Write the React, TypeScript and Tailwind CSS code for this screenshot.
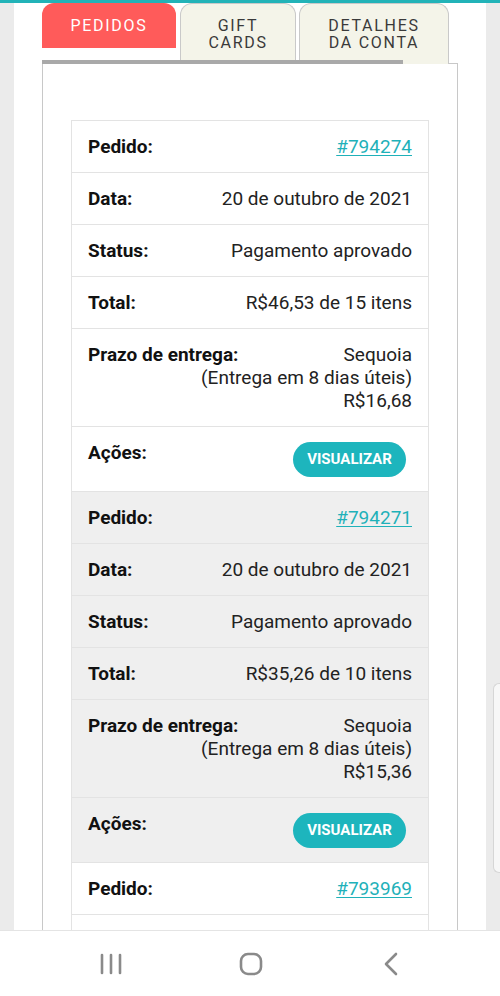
type Order = {
  id: string;
  date: string;
  status: string;
  total: string;
  shipping: string[];
};

const orders: Order[] = [
  {
    id: "#794274",
    date: "20 de outubro de 2021",
    status: "Pagamento aprovado",
    total: "R$46,53 de 15 itens",
    shipping: ["Sequoia", "(Entrega em 8 dias úteis)", "R$16,68"],
  },
  {
    id: "#794271",
    date: "20 de outubro de 2021",
    status: "Pagamento aprovado",
    total: "R$35,26 de 10 itens",
    shipping: ["Sequoia", "(Entrega em 8 dias úteis)", "R$15,36"],
  },
  {
    id: "#793969",
    date: "19 de outubro de 2021",
    status: "Pagamento aprovado",
    total: "R$22,10 de 6 itens",
    shipping: ["Sequoia", "(Entrega em 8 dias úteis)", "R$14,20"],
  },
];

// label floats left, value flows right-aligned around it (like a responsive table cell)
function Row({ label, children }: { label: string; children: React.ReactNode }) {
  return (
    <div className="flow-root border-b border-[#e3e3e3] px-4 py-[14px] text-[19px] leading-[23px]">
      <span className="float-left whitespace-nowrap pr-2 font-bold text-[#111]">{label}</span>
      <div className="text-right text-[#222]">{children}</div>
    </div>
  );
}

function OrderBlock({ order, shaded }: { order: Order; shaded: boolean }) {
  return (
    <div className={shaded ? "bg-[#efefef]" : "bg-white"}>
      <Row label="Pedido:">
        <a href="#" className="text-[#1fb1b9] underline underline-offset-2">
          {order.id}
        </a>
      </Row>
      <Row label="Data:">{order.date}</Row>
      <Row label="Status:">{order.status}</Row>
      <Row label="Total:">{order.total}</Row>
      <Row label="Prazo de entrega:">
        {order.shipping.map((line) => (
          <p key={line} className="whitespace-nowrap">
            {line}
          </p>
        ))}
      </Row>
      <div className="flex items-start justify-between border-b border-[#e3e3e3] pt-[14px] pb-[14px] pl-4 pr-[22px] leading-[23px]">
        <span className="text-[19px] font-bold text-[#111]">Ações:</span>
        <button
          type="button"
          className="mt-[1px] h-[35px] w-[113px] rounded-full bg-[#1db5bd] text-[15px] font-bold text-white"
        >
          VISUALIZAR
        </button>
      </div>
    </div>
  );
}

export default function App() {
  return (
    <div className="relative flex h-[996px] w-[500px] flex-col overflow-hidden bg-white font-['Roboto',sans-serif]">
      <div className="h-[3px] bg-[#22b3b8]" />
      <div className="flex min-h-0 flex-1">
        <div className="w-[14px] bg-[#ebebeb]" />
        <main className="min-h-0 flex-1 overflow-hidden px-[28px]">
          <div className="flex h-[57px] items-start gap-[4px]">
            <button
              type="button"
              className="h-[45px] w-[134px] rounded-t-[12px] bg-[#ff5b5a] text-[16px] tracking-[1.7px] text-white"
            >
              PEDIDOS
            </button>
            <button
              type="button"
              className="flex h-[61px] w-[116px] flex-col items-center justify-start rounded-t-[12px] border border-b-0 border-[#c9c9c9] bg-[#f4f4e9] pt-[13px] text-[16px] leading-[17px] tracking-[1.7px] text-[#3a3a3a]"
            >
              <span>GIFT</span>
              <span>CARDS</span>
            </button>
            <button
              type="button"
              className="-ml-[1px] flex h-[61px] w-[150px] flex-col items-center justify-start rounded-t-[12px] border border-b-0 border-[#c9c9c9] bg-[#f4f4e9] pt-[13px] text-[16px] leading-[17px] tracking-[1.7px] text-[#3a3a3a]"
            >
              <span>DETALHES</span>
              <span>DA CONTA</span>
            </button>
          </div>
          <div className="relative z-10 h-[4px] w-[361px] bg-[#a9a9a9]" />
          <section className="-mt-[1px] h-[900px] border border-[#c8c8c8] bg-white px-[28px] pt-[56px]">
            <div className="border-x border-t border-[#e3e3e3]">
              {orders.map((order, i) => (
                <OrderBlock key={order.id} order={order} shaded={i % 2 === 1} />
              ))}
            </div>
          </section>
        </main>
        <div className="w-[14px] bg-[#ebebeb]" />
      </div>
      <nav className="flex h-[66px] shrink-0 items-center gap-[80px] border-t border-[#e4e4e4] bg-white pl-[81px]">
        <div className="flex w-[60px] justify-center">
          <svg width="24" height="22" viewBox="0 0 24 22">
            <g stroke="#8a8a8a" strokeWidth="2.6" strokeLinecap="round">
              <line x1="3" y1="2" x2="3" y2="20" />
              <line x1="12" y1="2" x2="12" y2="20" />
              <line x1="21" y1="2" x2="21" y2="20" />
            </g>
          </svg>
        </div>
        <div className="flex w-[60px] justify-center">
          <svg width="24" height="24" viewBox="0 0 24 24">
            <rect x="2" y="2" width="20" height="20" rx="7" fill="none" stroke="#8a8a8a" strokeWidth="2.6" />
          </svg>
        </div>
        <div className="flex w-[60px] justify-center">
          <svg width="16" height="24" viewBox="0 0 16 24">
            <polyline points="13,2 3,12 13,22" fill="none" stroke="#8a8a8a" strokeWidth="2.6" strokeLinecap="round" strokeLinejoin="round" />
          </svg>
        </div>
      </nav>
      <div className="absolute right-0 top-[683px] h-[190px] w-[7px] rounded-l-[6px] border border-r-0 border-[#d6d6d6] bg-[#f7f7f7]" />
    </div>
  );
}
